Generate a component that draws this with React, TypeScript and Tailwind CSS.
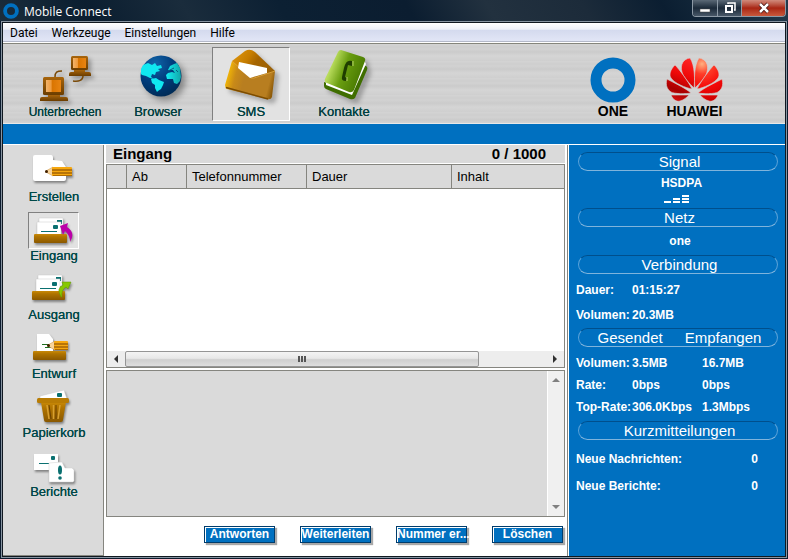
import type { ReactNode } from 'react';

const tools = [
  { label: 'Unterbrechen', icon: <DisconnectIcon />, active: false, size: 'text-[12px]' },
  { label: 'Browser', icon: <GlobeIcon />, active: false, size: 'text-[13px]' },
  { label: 'SMS', icon: <EnvelopeIcon />, active: true, size: 'text-[13px]' },
  { label: 'Kontakte', icon: <PhoneBookIcon />, active: false, size: 'text-[13px]' },
];

const folders = [
  { label: 'Erstellen', icon: <ComposeIcon />, active: false },
  { label: 'Eingang', icon: <InboxIcon />, active: true },
  { label: 'Ausgang', icon: <OutboxIcon />, active: false },
  { label: 'Entwurf', icon: <DraftIcon />, active: false },
  { label: 'Papierkorb', icon: <TrashIcon />, active: false },
  { label: 'Berichte', icon: <ReportIcon />, active: false },
];

const traffic = [
  { label: 'Volumen:', sent: '3.5MB', received: '16.7MB' },
  { label: 'Rate:', sent: '0bps', received: '0bps' },
  { label: 'Top-Rate:', sent: '306.0Kbps', received: '1.3Mbps' },
];

/* ---------- Toolbar icons ---------- */

function DisconnectIcon() {
  return (
    <svg viewBox="0 0 76 56" className="w-[76px] h-14 drop-shadow-[3px_3px_2px_rgba(0,0,0,0.3)]" aria-hidden="true">
      <defs>
        <linearGradient id="screen" x1="0" x2="1" y1="0" y2="0">
          <stop offset="0" stopColor="#f2b46c" />
          <stop offset="0.35" stopColor="#ee9a3c" />
          <stop offset="0.4" stopColor="#d97400" />
          <stop offset="1" stopColor="#e88412" />
        </linearGradient>
        <linearGradient id="case" x1="0" x2="0" y1="0" y2="1">
          <stop offset="0" stopColor="#a8650c" />
          <stop offset="1" stopColor="#6b3d00" />
        </linearGradient>
      </defs>
      <path d="M28 29C28 24 30 23 35 23M56 28C56 32 52 34 46 33" fill="none" stroke="#7a4a08" strokeWidth="1.5" />
      <rect x="16" y="29" width="21" height="18" rx="1.5" fill="url(#case)" />
      <rect x="19" y="32" width="15" height="12" fill="url(#screen)" />
      <path d="M21 47h12v2h6q2 0 2 2v2H13v-2q0-2 2-2h6z" fill="url(#case)" />
      <rect x="44" y="8" width="17" height="14" rx="1.5" fill="url(#case)" />
      <rect x="46" y="10" width="13" height="10" fill="url(#screen)" />
      <path d="M47 22h11v2h4q2 0 2 2v2H42v-2q0-2 2-2h3z" fill="url(#case)" />
    </svg>
  );
}

function GlobeIcon() {
  return (
    <svg viewBox="0 0 76 56" className="w-[76px] h-14 drop-shadow-[4px_4px_3px_rgba(0,0,0,0.35)]" aria-hidden="true">
      <defs>
        <radialGradient id="sea" cx="0.35" cy="0.2" r="0.9">
          <stop offset="0" stopColor="#1264a8" />
          <stop offset="0.5" stopColor="#003c7c" />
          <stop offset="1" stopColor="#00284f" />
        </radialGradient>
        <linearGradient id="land" x1="0" x2="1" y1="0" y2="0">
          <stop offset="0" stopColor="#12eef4" />
          <stop offset="1" stopColor="#12a5a8" />
        </linearGradient>
      </defs>
      <circle cx="41" cy="28" r="20.5" fill="url(#sea)" />
      <path d="M21 26L21 21L23 17L28 15L32 17L35 15L37 18L41 17L42 20L38 21L40 23L36 24L35 27L32 26L31 29L34 31L30 30L26 28L22 27z" fill="#10e8f0" />
      <path d="M31 31L36 30L39 32L44 34L43 37L41 41L38 43L37 44L35 40L35 37L32 35z" fill="#10e8f0" />
      <path d="M48 22L50 18L54 16L57 15L60 20L61 29L60 33L57 36L54 35L53 31L47 31L46 27L48 25L52 24L55 25L53 22z" fill="url(#land)" />
      <path d="M48 23L54 20M56 22l2 2" stroke="#0b5c80" strokeWidth="1" />
    </svg>
  );
}

function EnvelopeIcon() {
  return (
    <svg viewBox="0 0 76 56" className="w-[76px] h-14 drop-shadow-[4px_4px_2px_rgba(0,0,0,0.25)]" aria-hidden="true">
      <defs>
        <linearGradient id="flap" x1="0" x2="1" y1="0" y2="0.5">
          <stop offset="0" stopColor="#e29a10" />
          <stop offset="0.4" stopColor="#c67d00" />
          <stop offset="0.6" stopColor="#a56400" />
          <stop offset="1" stopColor="#9b6208" />
        </linearGradient>
        <linearGradient id="front" x1="0" x2="1" y1="0.3" y2="0.5">
          <stop offset="0" stopColor="#ffc400" />
          <stop offset="0.22" stopColor="#c98a18" />
          <stop offset="0.4" stopColor="#b87e20" />
          <stop offset="0.9" stopColor="#b87e20" />
          <stop offset="1" stopColor="#8f5c0a" />
        </linearGradient>
      </defs>
      <path d="M19 13L32 3Q37 0 42 4L62 23L50 34L24 27z" fill="url(#flap)" />
      <path d="M19 13L38 30L41 30L62 23L59 49Q58 52 54 51L14 41Q12 40 12 37z" fill="url(#front)" />
      <path d="M19 13L38 30L41 30L62 23" fill="none" stroke="#dfa840" strokeWidth="0.8" />
      <path d="M26 14L54 20L54 25L37 30L25 20z" fill="#fff" />
      <path d="M13 39.500L55 51" stroke="#7c4c00" strokeWidth="1.500" />
    </svg>
  );
}

function PhoneBookIcon() {
  return (
    <svg viewBox="0 0 76 56" className="w-[76px] h-14 drop-shadow-[4px_4px_2px_rgba(0,0,0,0.25)]" aria-hidden="true">
      <defs>
        <linearGradient id="cover" x1="0" x2="1" y1="0.2" y2="0.6">
          <stop offset="0" stopColor="#a9d437" />
          <stop offset="0.2" stopColor="#b9dc5c" />
          <stop offset="0.5" stopColor="#6a9e10" />
          <stop offset="1" stopColor="#447400" />
        </linearGradient>
      </defs>
      <path d="M18 34L18 38Q18 40 20 41L44 51Q47 52 49 50L61 22Q62 19 60 18L56 18L44 44z" fill="#3f6e00" />
      <path d="M20 34L20 37L46 47L60 16L58 12L46 43z" fill="#fff" />
      <path d="M35 2L57 9Q60 10 59 13L48 42Q46 45 43 44L21 35Q18 34 19 31L32 4Q33 2 35 2z" fill="url(#cover)" />
      <path d="M46 13Q40 11 38 20L36 29Q35 33 40 33L41 30L39 29L42 17L46 18z" fill="#1f3d00" />
      <path d="M47 13V18M41 33V29" stroke="#b8d46a" strokeWidth="1" />
    </svg>
  );
}

/* ---------- Logos ---------- */

function RingLogo({ className }: { className: string }) {
  return (
    <svg viewBox="0 0 46 46" className={className} aria-hidden="true">
      <circle cx="23" cy="23" r="17" fill="none" stroke="#0070c0" strokeWidth="11" />
    </svg>
  );
}

function Petals() {
  return (
    <>
      <path d="M28 31C29 24 29 8 24 1C17 2 14 8 16 15C17 20 24 27 28 31z" />
      <path d="M26 32C22 24 13 12 9 8C4 13 3 18 5 21C8 26 20 31 26 32z" />
      <path d="M25 36C18 30 6 25 1 22C-1 29 2 33 5 35C8 37 20 37 25 36z" />
      <path d="M23 38L5 38C7 43 11 45 14 44C18 43 21 40 23 38z" />
    </>
  );
}

function FlowerLogo() {
  return (
    <svg viewBox="0 0 57 46" className="w-[57px] h-[46px]" aria-hidden="true">
      <defs>
        <linearGradient id="petal" gradientUnits="userSpaceOnUse" x1="24" y1="2" x2="8" y2="44">
          <stop offset="0" stopColor="#ff2424" />
          <stop offset="0.4" stopColor="#ee0808" />
          <stop offset="0.75" stopColor="#a80000" />
          <stop offset="1" stopColor="#d81010" />
        </linearGradient>
        <radialGradient id="petalLit" gradientUnits="userSpaceOnUse" cx="21" cy="7" r="40">
          <stop offset="0" stopColor="#ffb080" />
          <stop offset="0.25" stopColor="#ff3c28" />
          <stop offset="0.6" stopColor="#f40808" />
          <stop offset="1" stopColor="#c80000" />
        </radialGradient>
      </defs>
      <g fill="url(#petal)" stroke="#d4d4d4" strokeWidth="0.6"><Petals /></g>
      <g fill="url(#petalLit)" stroke="#d4d4d4" strokeWidth="0.6" transform="translate(57 0) scale(-1 1)"><Petals /></g>
    </svg>
  );
}

/* ---------- Sidebar icons ---------- */

function FolderSvg({ children }: { children: ReactNode }) {
  return (
    <svg viewBox="0 0 49 35" className="w-[49px] h-[35px] drop-shadow-[1px_2px_1px_rgba(0,0,0,0.4)]" aria-hidden="true">
      <defs>
        <linearGradient id="wood" x1="0" x2="0" y1="0" y2="1">
          <stop offset="0" stopColor="#c98a08" />
          <stop offset="0.3" stopColor="#b07400" />
          <stop offset="1" stopColor="#8a5800" />
        </linearGradient>
      </defs>
      {children}
    </svg>
  );
}

function Pencil({ x, y, length }: { x: number; y: number; length: number }) {
  return (
    <g transform={`translate(${x} ${y})`}>
      <path d="M0 4.500L8 0V9z" fill="#f9d49a" stroke="#c89040" strokeWidth="0.5" />
      <circle cx="1.5" cy="4.500" r="1.500" fill="#402000" />
      <rect x="7" y="0" width={length} height="9" rx="1" fill="#f6a810" />
      <path d={`M7 3h${length}M7 6h${length}`} stroke="#7a4200" strokeWidth="1" />
      <path d={`M8 8.500h${length - 1}`} stroke="#b06c00" strokeWidth="1" />
    </g>
  );
}

function Letters({ y }: { y: number }) {
  return (
    <g transform={`translate(0 ${y})`}>
      <path d="M10 5H34V16H10z" fill="#fff" stroke="#c8c8c8" strokeWidth="0.5" />
      <rect x="28" y="7" width="5" height="4" fill="#0a7070" />
      <path d="M8 9H32V22H8z" fill="#fff" stroke="#c8c8c8" strokeWidth="0.5" />
      <rect x="24" y="12" width="5" height="4" rx="1" fill="#0a7070" />
      <path d="M12 18.500H28" stroke="#0a7070" />
    </g>
  );
}

function ComposeIcon() {
  return (
    <FolderSvg>
      <path d="M7 1H23Q25 1 25 4V6L34 7L38 13V25Q38 27 36 27H7Q5 27 5 25V3Q5 1 7 1z" fill="#fff" />
      <Pencil x={17} y={13} length={20} />
    </FolderSvg>
  );
}

function InboxIcon() {
  return (
    <FolderSvg>
      <Letters y={0} />
      <rect x="5" y="21" width="33" height="9" rx="1" fill="url(#wood)" />
      <path d="M31 13L39 10L38 14Q47 20 41 29Q41 22 36 18L34 22z" fill="#bb00a8" />
    </FolderSvg>
  );
}

function OutboxIcon() {
  return (
    <FolderSvg>
      <Letters y={-2} />
      <rect x="4" y="19" width="33" height="9" rx="1" fill="url(#wood)" />
      <path d="M33 25Q28 16 35 13L34 10L43 10L40 17L38 15Q33 18 34 25z" fill="#86c800" stroke="#5c9400" strokeWidth="0.5" />
    </FolderSvg>
  );
}

function DraftIcon() {
  return (
    <FolderSvg>
      <path d="M8 3H20L24 8V20H8z" fill="#fff" />
      <path d="M13 13.500H20M16 16.500H22" stroke="#207020" />
      <rect x="4" y="20" width="33" height="9" rx="1" fill="url(#wood)" />
      <Pencil x={18} y={10} length={14} />
    </FolderSvg>
  );
}

function TrashIcon() {
  return (
    <FolderSvg>
      <path d="M11 6L35 0L38 9H11z" fill="#fff" stroke="#c8c8c8" strokeWidth="0.5" />
      <rect x="28" y="3" width="5" height="4" rx="1" fill="#0a7070" />
      <path d="M12 12H37L34 30Q34 32 32 32H17Q15 32 15 30z" fill="url(#wood)" />
      <path d="M18 15L20 29M24.500 15V29M31 15L29 29" stroke="#d8a030" strokeWidth="1.500" />
      <path d="M20 15L22 29M27 15V29" stroke="#6a4000" />
      <rect x="8" y="8" width="32" height="5" rx="1.500" fill="#b87c04" />
    </FolderSvg>
  );
}

function ReportIcon() {
  return (
    <FolderSvg>
      <rect x="5" y="5" width="24" height="16" fill="#fff" />
      <rect x="22" y="7" width="4" height="4" rx="1" fill="#0a7070" />
      <path d="M10 14.500H20" stroke="#0a7070" />
      <path d="M20 14L33 13L36 19H43L45 21V32L44 33H20z" fill="#fff" stroke="#d0d0d0" strokeWidth="0.500" />
      <ellipse cx="31" cy="21" rx="2" ry="4.500" fill="#0a7070" />
      <circle cx="31" cy="29" r="1.800" fill="#0a7070" />
    </FolderSvg>
  );
}

/* ---------- Window parts ---------- */

function TitleBar() {
  return (
    <header className="flex items-start h-[21px] pl-[3px] pr-[2px] bg-[linear-gradient(60deg,#1b2d3c_0%,#0b1e30_12%,#1a2c3c_24%,#0c2033_36%,#0b1d30_52%,#22313f_62%,#1c2b3a_74%,#0b1e31_84%,#22394b_100%)]">
      <RingLogo className="w-4 h-4 mt-[3px]" />
      <h1 className="flex-1 pl-[5px] text-[12px] leading-[23px] text-white font-['Open_Sans','Noto_Sans',sans-serif]">Mobile Connect</h1>
      <div className="flex h-[17px] border border-t-0 border-[#8d9aa6] rounded-b-[4px] overflow-hidden">
        <button aria-label="Minimieren" className="w-[25px] flex items-center justify-center border-r border-[#8d9aa6] bg-linear-to-b from-[#5b6976] via-[#1b2a39] to-[#485868]">
          <svg viewBox="0 0 12 12" className="w-3 h-3"><path d="M1 7h10v3H1z" fill="#fff" stroke="#444" strokeWidth="0.5" /></svg>
        </button>
        <button aria-label="Wiederherstellen" className="w-6 flex items-center justify-center border-r border-[#8d9aa6] bg-linear-to-b from-[#5b6976] via-[#1b2a39] to-[#485868]">
          <svg viewBox="0 0 12 12" className="w-3 h-3"><path d="M4 2V1h7v7h-1" fill="none" stroke="#fff" strokeWidth="1.5" /><path d="M2 4h6v6H2z" fill="none" stroke="#fff" strokeWidth="2" /></svg>
        </button>
        <button aria-label="Schließen" className="w-[43px] flex items-center justify-center bg-linear-to-b from-[#d08a7c] via-[#a82412] to-[#c8583c]">
          <svg viewBox="0 0 12 12" className="w-3 h-3"><path d="M2 2l8 8M10 2l-8 8" stroke="#3c1010" strokeWidth="4" /><path d="M2 2l8 8M10 2l-8 8" stroke="#fff" strokeWidth="2.500" /></svg>
        </button>
      </div>
    </header>
  );
}

function MenuBar() {
  return (
    <nav className="flex h-[19px] gap-[14px] pl-[7px] border-b border-[#b4b9c9] bg-[linear-gradient(#ffffff_0%,#eef1f9_35%,#d4daee_40%,#e2e6f6_100%)] text-[12px] leading-[20px] text-black font-[Roboto,'Noto_Sans',sans-serif]">
      {['Datei', 'Werkzeuge', 'Einstellungen', 'Hilfe'].map((item) => (
        <button key={item}>{item}</button>
      ))}
    </nav>
  );
}

function ToolBar() {
  return (
    <div className="flex items-start mt-px pt-[3px] pb-[2px] pl-[23px] border-t border-t-[#85857c] border-b border-b-[#e8e8e8] bg-[repeating-linear-gradient(#d4d4d4_0px,#cecece_3px,#d2d2d2_5px,#cbcbcb_8px,#d5d5d5_12px,#cfcfcf_17px)]">
      <div className="flex gap-[15px]">
        {tools.map((tool) => (
          <button
            key={tool.label}
            className={`w-[78px] border leading-4 text-[#004040] [text-shadow:0_0_0_#004040] ${tool.size} ${
              tool.active ? 'bg-[#e2e2e2] border-t-[#808080] border-l-[#808080] border-b-white border-r-white' : 'border-transparent'
            }`}
          >
            {tool.icon}
            <span className="block">{tool.label}</span>
          </button>
        ))}
      </div>
      <div className="flex gap-[30px] ml-auto mr-[62px] pt-[10px] text-[14px] leading-4 font-bold text-black text-center">
        <div className="flex flex-col items-center">
          <RingLogo className="w-[46px] h-[46px]" />
          <span>ONE</span>
        </div>
        <div className="flex flex-col items-center">
          <FlowerLogo />
          <span>HUAWEI</span>
        </div>
      </div>
    </div>
  );
}

function SideBar() {
  return (
    <nav className="flex flex-col items-center gap-2 w-[101px] pt-2 shrink-0 border-r border-b border-[#85857f] bg-[#dadada]">
      {folders.map((folder) => (
        <button key={folder.label} className="flex flex-col items-center text-[13px] leading-[14px] text-[#004848] [text-shadow:0_0_0_#004848]">
          <span
            className={`border ${
              folder.active ? 'bg-[#e2e2e2] border-t-[#808080] border-l-[#808080] border-b-white border-r-white' : 'border-transparent'
            }`}
          >
            {folder.icon}
          </span>
          <span className="pl-[2px]">{folder.label}</span>
        </button>
      ))}
    </nav>
  );
}

function Arrow({ d, color }: { d: string; color: string }) {
  return (
    <svg viewBox="0 0 8 8" className="w-2 h-2" aria-hidden="true">
      <path d={d} fill={color} />
    </svg>
  );
}

function MessageList() {
  return (
    <section className="flex flex-col flex-1 border border-[#85857f] bg-white">
      <table className="w-full table-fixed border-separate border-spacing-0 text-[13px] leading-[18px] text-black text-left">
        <thead>
          <tr className="h-6 bg-[#dadada]">
            <th className="w-5 border-r border-b border-[#85857f]" aria-label="Status" />
            <th className="w-[60px] pl-[5px] font-normal border-r border-b border-[#85857f]">Ab</th>
            <th className="w-[120px] pl-[5px] font-normal border-r border-b border-[#85857f]">Telefonnummer</th>
            <th className="w-[145px] pl-[5px] font-normal border-r border-b border-[#85857f]">Dauer</th>
            <th className="pl-[5px] font-normal border-b border-[#85857f]">Inhalt</th>
          </tr>
        </thead>
        <tbody />
      </table>
      <div className="flex h-4 mt-auto bg-[#ededed]">
        <button aria-label="Nach links" className="w-[18px] flex items-center justify-center">
          <Arrow d="M6 0V8L2 4z" color="#303030" />
        </button>
        <div className="flex-1">
          <div className="flex items-center justify-center gap-px w-[84%] h-4 border border-[#959595] rounded-[2px] bg-[linear-gradient(#f4f4f4_0%,#e8e8e8_45%,#cfcfcf_55%,#dedede_100%)]">
            <span className="w-[2px] h-[6px] bg-[#555]" />
            <span className="w-[2px] h-[6px] bg-[#555]" />
            <span className="w-[2px] h-[6px] bg-[#555]" />
          </div>
        </div>
        <button aria-label="Nach rechts" className="w-[18px] flex items-center justify-center">
          <Arrow d="M2 0V8L6 4z" color="#303030" />
        </button>
      </div>
    </section>
  );
}

function MessagePreview() {
  return (
    <section className="flex h-[147px] mt-[2px] border border-[#85857f]">
      <textarea aria-label="Nachricht" readOnly className="flex-1 resize-none bg-[#dadada] outline-none" />
      <div className="flex flex-col justify-between w-[17px] border-l border-white bg-[#f0f0f0]">
        <button aria-label="Nach oben" className="h-[18px] flex items-center justify-center">
          <Arrow d="M0 6H8L4 2z" color="#808080" />
        </button>
        <button aria-label="Nach unten" className="h-[18px] flex items-center justify-center">
          <Arrow d="M0 2H8L4 6z" color="#808080" />
        </button>
      </div>
    </section>
  );
}

function Pill({ children }: { children: ReactNode }) {
  return (
    <h2 className="flex items-center justify-center h-[19px] ml-[9px] mr-[7px] pl-[3px] rounded-full border border-t-[#004f8c] border-x-[#5aa2d8] border-b-[#7fb4dc] text-[15px] leading-[17px]">
      {children}
    </h2>
  );
}

function StatusPanel() {
  return (
    <aside className="w-[217px] shrink-0 pt-[7px] border-l border-white bg-[#0070c0] text-white">
      <Pill>Signal</Pill>
      <div className="pl-[9px] text-center text-[12px] leading-6 font-bold">HSDPA</div>
      <svg viewBox="0 0 26 13" className="block w-[26px] h-[13px] mx-auto" aria-label="Signalstärke">
        <path d="M0 6h7v2H0zM9 3h7v2H9zM9 6h7v2H9zM18 0h7v2h-7zM18 3h7v2h-7zM18 6h7v2h-7z" fill="#fff" />
      </svg>
      <Pill>Netz</Pill>
      <div className="pl-[6px] text-center text-[12px] leading-7 font-bold">one</div>
      <Pill>Verbindung</Pill>
      <dl className="grid grid-cols-[56px_1fr] pt-1 pl-[7px] text-[12px] leading-[25px] font-bold">
        <dt>Dauer:</dt>
        <dd>01:15:27</dd>
        <dt>Volumen:</dt>
        <dd>20.3MB</dd>
      </dl>
      <Pill>
        <span className="mr-[22px]">Gesendet</span>
        <span>Empfangen</span>
      </Pill>
      <table className="w-full table-fixed mt-[5px] mb-[3px] text-[12px] leading-[22px] font-bold text-left">
        <tbody>
          {traffic.map((row) => (
            <tr key={row.label}>
              <th className="w-[63px] p-0 pl-[7px]">{row.label}</th>
              <td className="w-[70px] p-0">{row.sent}</td>
              <td className="p-0">{row.received}</td>
            </tr>
          ))}
        </tbody>
      </table>
      <Pill>Kurzmitteilungen</Pill>
      <dl className="grid grid-cols-[1fr_auto] pt-[6px] pl-[7px] pr-[27px] text-[12px] leading-[27px] font-bold">
        <dt>Neue Nachrichten:</dt>
        <dd>0</dd>
        <dt>Neue Berichte:</dt>
        <dd>0</dd>
      </dl>
    </aside>
  );
}

export default function App() {
  return (
    <div className="flex flex-col min-h-screen bg-[#0b1b2d] font-['Liberation_Sans',Arial,sans-serif]">
      <TitleBar />
      <div className="flex flex-col flex-1 mx-px mb-px border border-[#8794a1]">
        <div className="flex flex-col flex-1 border border-[#101820] bg-white">
          <MenuBar />
          <ToolBar />
          <div className="h-[21px] bg-[#0070c0] border-b border-white" />
          <div className="flex flex-1">
            <SideBar />
            <main className="flex flex-col flex-1 min-w-0 pl-[2px] pr-[2px] border-r border-[#85857f]">
              <div className="flex justify-between h-[18px] mb-px pl-[7px] pr-[19px] bg-[#dadada] text-[15px] leading-[18px] font-bold text-black">
                <h2>Eingang</h2>
                <span>0 / 1000</span>
              </div>
              <MessageList />
              <MessagePreview />
              <div className="flex justify-end gap-[25px] h-[39px] pt-[9px] pr-[2px]">
                {['Antworten', 'Weiterleiten', 'Nummer er...', 'Löschen'].map((action) => (
                  <button
                    key={action}
                    className="w-[71px] h-[17px] border border-[#003c6c] bg-[#0070c0] text-white text-[12px] leading-[15px] font-bold whitespace-nowrap shadow-[inset_1px_1px_0_#fff,2px_2px_1px_#a8a8a8]"
                  >
                    {action}
                  </button>
                ))}
              </div>
            </main>
            <StatusPanel />
          </div>
        </div>
      </div>
    </div>
  );
}
